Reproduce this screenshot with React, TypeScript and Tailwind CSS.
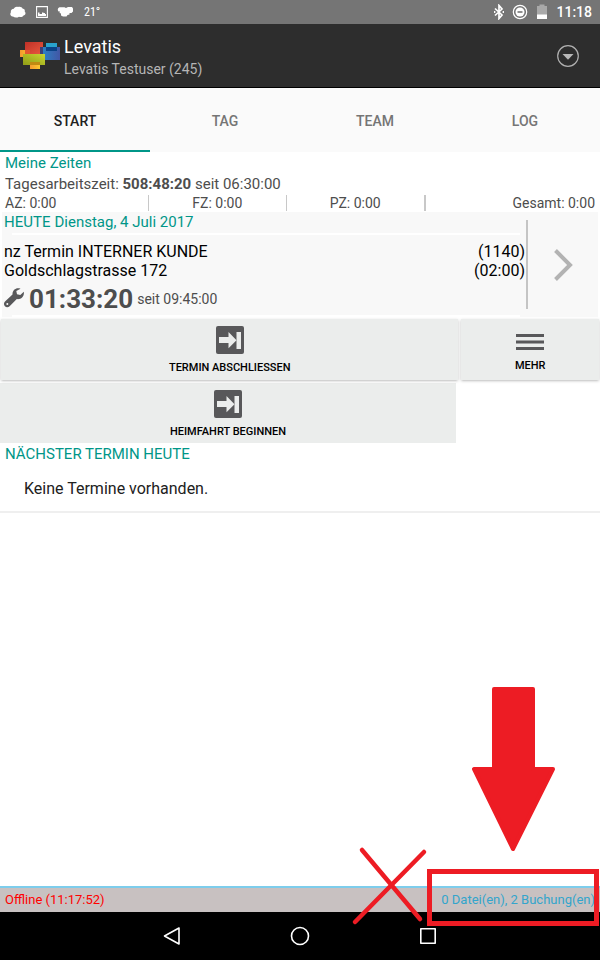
import React, { useState } from 'react';

const tabs = ['START', 'TAG', 'TEAM', 'LOG'];

const LevatisLogo: React.FC = () => (
  <svg width="40" height="28" viewBox="0 0 40 28" aria-hidden="true">
    <defs>
      <linearGradient id="red" x1="0" y1="0" x2="1" y2="1">
        <stop offset="0" stopColor="#bf3027" />
        <stop offset="1" stopColor="#e9593f" />
      </linearGradient>
      <linearGradient id="green" x1="0" y1="1" x2="1" y2="0">
        <stop offset="0" stopColor="#8f9c16" />
        <stop offset="1" stopColor="#c9d531" />
      </linearGradient>
      <linearGradient id="blue" x1="0" y1="0" x2="1" y2="0">
        <stop offset="0" stopColor="#2888c9" />
        <stop offset="1" stopColor="#4356a5" />
      </linearGradient>
      <linearGradient id="yellow" x1="0" y1="0" x2="1" y2="0">
        <stop offset="0" stopColor="#f39a2e" />
        <stop offset="1" stopColor="#fdc82f" />
      </linearGradient>
    </defs>
    <rect x="0" y="8" width="10" height="7" fill="url(#yellow)" />
    <rect x="5" y="0" width="18" height="12" fill="url(#red)" />
    <rect x="5" y="8" width="5" height="4" fill="#e2582f" />
    <rect x="26" y="1" width="11" height="8" fill="#29a3cd" />
    <rect x="20" y="5" width="20" height="13" fill="url(#blue)" />
    <rect x="26" y="5" width="11" height="4" fill="#0b4388" />
    <rect x="20" y="5" width="3" height="7" fill="#3b3f78" />
    <rect x="3" y="12" width="22" height="11" fill="url(#green)" />
    <rect x="10" y="20" width="10" height="7" fill="url(#yellow)" />
    <rect x="10" y="20" width="10" height="3" fill="#c08a12" />
  </svg>
);

const ArrowIcon: React.FC = () => (
  <svg width="28" height="28" viewBox="0 0 28 28" aria-hidden="true">
    <rect width="28" height="28" rx="2" fill="#58585a" />
    <path d="M3 11h9.500V6L20.500 14.300l-8 8V17H3z" fill="#ebedec" />
    <rect x="20.500" y="6" width="4.500" height="17" fill="#ebedec" />
  </svg>
);

const StatusBar: React.FC = () => (
  <div className="flex h-6 items-center justify-between bg-[#757575] px-2 text-white">
    <div className="flex items-center gap-2">
      <svg width="20" height="12" viewBox="0 0 20 12" fill="#fff" aria-hidden="true">
        <path d="M5 10.500C3 10.500 1.500 8.500 2.800 6.500 2.500 4 4 2.800 5.800 2.800 6.500 1 8.500.4 10 1c2-.8 4 0 4.500 1.500 2 .3 2.700 1.700 2.200 3 1.500 1.500.8 3.700-1.200 4-1 1.800-3.200 1.800-4.500 1.200-1.800 1.300-4.500 1.200-6-.2z" />
      </svg>
      <svg width="12" height="12" viewBox="0 0 12 12" aria-hidden="true">
        <path d="M.6.600h10.800v10.800H.600z" fill="none" stroke="#fff" strokeWidth="1.100" />
        <path d="M2 10V6.500h1.500V8H6V6.500h1.500V7H9v1h1v2z" fill="#fff" />
      </svg>
      <svg width="20" height="12" viewBox="0 0 20 12" fill="#fff" aria-hidden="true">
        <path d="M3.500 1.200h5L10 2l2-1h4l1 1.500v3L15.500 7H13.500v1.500L11.500 9l-1 1.500H7L5 9.500V7.500L3.500 7l.5-1.500H2.500C1.300 4 1.500 2 3.500 1.200z" />
      </svg>
      <span className="font-['Roboto_Condensed','Roboto',sans-serif] text-xs">21°</span>
    </div>
    <div className="flex items-center gap-2">
      <svg width="10" height="16" viewBox="0 0 10 16" fill="none" stroke="#fff" strokeWidth="1.700" aria-hidden="true">
        <path d="M1 4.500l7 6.500-3 3.500v-13L8 5 1 11.500" />
        <path d="M.5 7v2M9.500 7v2" />
      </svg>
      <svg width="16" height="16" viewBox="0 0 16 16" aria-hidden="true">
        <circle cx="8" cy="8" r="6.700" fill="none" stroke="#fff" strokeWidth="1.200" />
        <circle cx="8" cy="8" r="4.500" fill="#fff" />
        <path d="M5.500 8h5" stroke="#757575" strokeWidth="1.600" />
      </svg>
      <svg width="12" height="16" viewBox="0 0 12 16" aria-hidden="true">
        <path d="M1 2h2.500V.500h5V2H11v13H1z" fill="#a9a9a9" />
        <path d="M1 10.500h10V15H1z" fill="#fff" />
      </svg>
      <span className="text-sm font-medium">11:18</span>
    </div>
  </div>
);

const Annotations: React.FC = () => (
  <svg
    className="pointer-events-none absolute right-0 bottom-0"
    width="260"
    height="280"
    viewBox="340 680 260 280"
    fill="none"
    stroke="#ed1c24"
    strokeLinejoin="round"
    aria-hidden="true"
  >
    <path d="M494 689h39v80h20l-40 80-39-80h20z" fill="#ed1c24" strokeWidth="4" />
    <path d="M362 850l58 69M424 852l-69 70" strokeWidth="4.500" strokeLinecap="round" />
    <rect x="429.500" y="871.500" width="167" height="52" strokeWidth="5" strokeLinejoin="miter" />
  </svg>
);

const App: React.FC = () => {
  const [activeTab, setActiveTab] = useState('START');

  return (
    <div className="relative flex min-h-screen flex-col bg-white font-['Roboto',sans-serif] text-[#4d4d4d]">
      <StatusBar />

      {/* Header */}
      <header className="flex h-16 items-center border-b border-black bg-[#2d2d2d] px-5">
        <LevatisLogo />
        <div className="ml-1 grow pt-1">
          <h1 className="text-lg leading-[22px] text-white">Levatis</h1>
          <p className="text-sm leading-[22px] text-[#b5b5b5]">Levatis Testuser (245)</p>
        </div>
        <button aria-label="Menü">
          <svg width="24" height="24" viewBox="0 0 24 24" aria-hidden="true">
            <circle cx="12" cy="12" r="10.300" fill="none" stroke="#b0b0b0" strokeWidth="1.200" />
            <path d="M6.500 10h11L12 15.800z" fill="#b8b8b8" />
          </svg>
        </button>
      </header>

      {/* Tabs */}
      <nav className="grid h-16 grid-cols-4 bg-[#fafafa]">
        {tabs.map((tab) => (
          <button
            key={tab}
            onClick={() => setActiveTab(tab)}
            className={`border-b-2 pt-1 text-sm font-medium ${
              activeTab === tab ? 'border-b-[#009688] text-[#212121]' : 'border-b-transparent text-[#757575]'
            }`}
          >
            {tab}
          </button>
        ))}
      </nav>

      <main className="grow">
        {/* Times */}
        <section>
          <div className="px-[5px]">
            <h2 className="text-[15px] leading-[22px] text-[#009688]">Meine Zeiten</h2>
            <p className="text-[15px] leading-5">
              Tagesarbeitszeit: <b>508:48:20</b> seit 06:30:00
            </p>
          </div>
          <div className="flex h-[18px] items-center text-sm">
            <span className="w-1/4 pl-[5px]">AZ: 0:00</span>
            <span className="-ml-0.5 h-4 w-px bg-[#c8c8c8]" />
            <span className="grow text-center">FZ: 0:00</span>
            <span className="h-4 w-px bg-[#c8c8c8]" />
            <span className="grow text-center">PZ: 0:00</span>
            <span className="h-4 w-0.5 bg-[#c8c8c8]" />
            <span className="w-[174px] pr-[5px] text-right">Gesamt: 0:00</span>
          </div>
        </section>

        {/* Current appointment */}
        <section className="mx-0.5 flex h-[105px] bg-[#f8f8f8]">
          <div className="flex grow flex-col">
            <h2 className="flex gap-1 pl-0.5 text-[15px] leading-[21px] text-[#009688]">
              <span>HEUTE</span>
              <span>Dienstag, 4 Juli 2017</span>
            </h2>
            <div className="mr-1.5 ml-2.5 h-0.5 bg-white" />
            <div className="mt-[7px] flex justify-between pr-px pl-0.5 text-base leading-[19px] text-black">
              <p>
                nz Termin INTERNER KUNDE
                <br />
                Goldschlagstrasse 172
              </p>
              <p className="text-right">
                (1140)
                <br />
                (02:00)
              </p>
            </div>
            <div className="flex grow items-center pl-0.5 text-sm">
              <svg width="20" height="20" viewBox="0 0 20 20" aria-hidden="true">
                <path
                  d="M16.500.8C12.500-.8 8.300 1.800 8.500 6.500L1 13.500c-1.400 1.400-1.300 3.500-.1 4.800 1.300 1.300 3.400 1.300 4.700 0l7.200-7.200c4.300.6 7.800-2.600 7-7.400l-3.500 3.200-3.300-.7-.7-3.200z"
                  fill="#58585a"
                />
                <circle cx="3.300" cy="16" r="1" fill="#f8f8f8" />
              </svg>
              <b className="ml-[5px] pt-0.5 text-[26px] leading-8">01:33:20</b>
              <span className="ml-1 pt-0.5">seit 09:45:00</span>
            </div>
            <div className="mr-1.5 ml-2.5 h-0.5 bg-white" />
          </div>
          <button className="my-2 flex w-[72px] items-center justify-center border-l-2 border-[#c4c4c4]" aria-label="Details">
            <svg width="20" height="34" viewBox="0 0 20 34" fill="none" stroke="#b3b3b3" strokeWidth="4" aria-hidden="true">
              <path d="M2.500 2.500L17 17 2.500 31.500" />
            </svg>
          </button>
        </section>

        {/* Actions */}
        <section className="flex gap-[3px] px-px pt-0.5 text-[11px] font-medium text-black">
          <button className="flex h-[61px] grow flex-col items-center bg-[#ebedec] pt-[7px] shadow-sm shadow-black/20">
            <ArrowIcon />
            <span className="mt-1.5 leading-4">TERMIN ABSCHLIESSEN</span>
          </button>
          <button className="flex h-[61px] w-[23%] flex-col items-center bg-[#ebedec] pt-[15px] shadow-sm shadow-black/20">
            <svg width="28" height="16" viewBox="0 0 28 16" fill="#58585a" aria-hidden="true">
              <path d="M0 0h28v3H0zM0 6.500h28v3H0zM0 13h28v3H0z" />
            </svg>
            <span className="mt-2 leading-4">MEHR</span>
          </button>
        </section>
        <section className="mt-[3px] text-[11px] font-medium text-black">
          <button className="flex h-[60px] w-[76%] flex-col items-center bg-[#ebedec] pt-[7px]">
            <ArrowIcon />
            <span className="mt-1.5 leading-4">HEIMFAHRT BEGINNEN</span>
          </button>
        </section>

        {/* Next appointment */}
        <section className="border-b-2 border-[#efefef]">
          <h2 className="px-[5px] text-[15px] leading-[22px] text-[#009688]">NÄCHSTER TERMIN HEUTE</h2>
          <p className="px-6 pt-3 pb-2.5 text-base text-[#212121]">Keine Termine vorhanden.</p>
        </section>
      </main>

      <footer>
        <div className="flex h-[26px] items-center justify-between border-t-2 border-[#7dcdec] bg-[#c8c1c1] px-[5px] text-[13px]">
          <span className="text-[#ff0000]">Offline (11:17:52)</span>
          <span className="text-[#33a5cc]">0 Datei(en), 2 Buchung(en)</span>
        </div>
        <div className="flex h-12 items-center justify-center gap-[104px] bg-black">
          <button aria-label="Zurück">
            <svg width="24" height="24" viewBox="0 0 24 24" fill="none" stroke="#fff" strokeWidth="1.600" strokeLinejoin="round" aria-hidden="true">
              <path d="M19 4v16L4.500 12z" />
            </svg>
          </button>
          <button aria-label="Startseite">
            <svg width="24" height="24" viewBox="0 0 24 24" fill="none" stroke="#fff" strokeWidth="1.600" aria-hidden="true">
              <circle cx="12" cy="12" r="8.500" />
            </svg>
          </button>
          <button aria-label="Übersicht">
            <svg width="24" height="24" viewBox="0 0 24 24" fill="none" stroke="#fff" strokeWidth="1.600" strokeLinejoin="round" aria-hidden="true">
              <rect x="4.800" y="4.800" width="14.400" height="14.400" />
            </svg>
          </button>
        </div>
      </footer>

      <Annotations />
    </div>
  );
};

export default App;
